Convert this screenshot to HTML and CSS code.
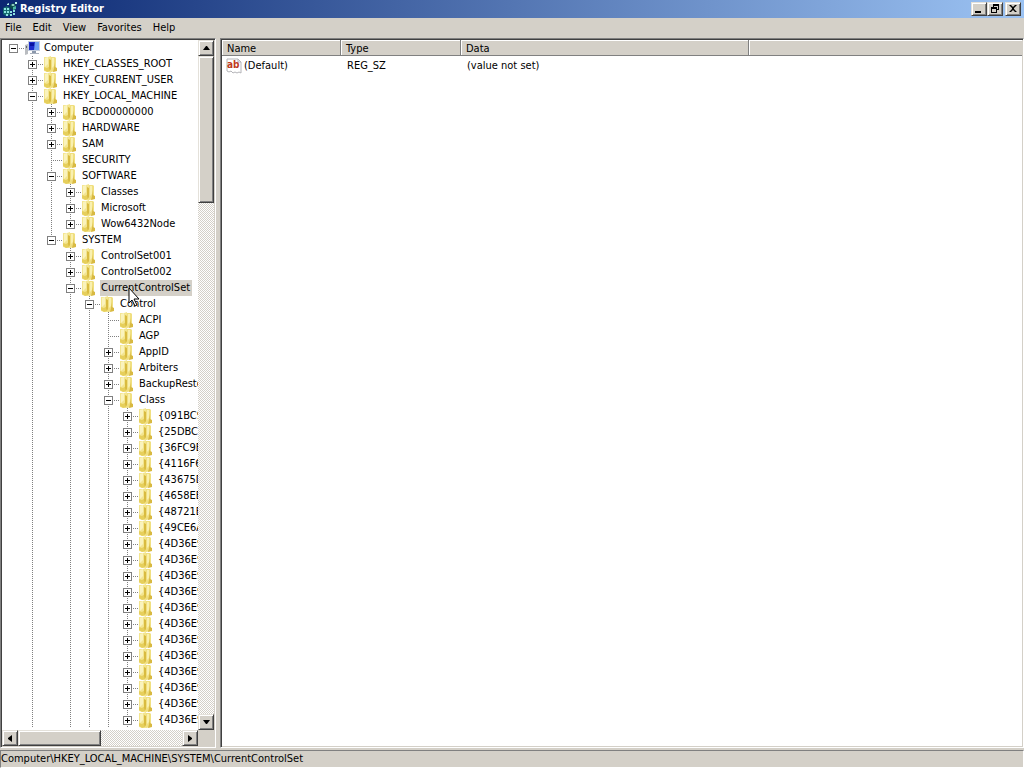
FILE: index.html
```
<!DOCTYPE html>
<html lang="en">
<head>
  <meta charset="UTF-8" /><meta name="viewport" content="width=device-width, initial-scale=1.0"/>
  <title>Registry Editor</title>
  <link rel="stylesheet" href="styles.css">
</head>
<body>
<svg class="sprite" aria-hidden="true">
  <symbol id="folder" viewBox="0 0 16 16">
    <path d="M1 1h4l3-1v16H5l-4-1z" fill="#f3e590"/>
    <path d="M2 2l3-1v7l-3 3z" fill="#faf3bd"/>
    <path d="M1 11l3 1 3-2v5l-3 1-3-2z" fill="#e6cf5c"/>
    <path d="M8 1h4l1 1v13l-5 1z" fill="#f0df80"/>
    <path d="M9 2h2v8l-2 2z" fill="#f9f0b0"/>
    <path d="M6 3l2 1v9l-1 2-1-3z" fill="#d9bb40"/>
    <path d="M12 6v5l2 1v3l-4 1 1-4z" fill="#d8b942"/>
  </symbol>
</svg>

<header class="titlebar">
  <svg class="app-icon" viewBox="0 0 16 16">
    <path d="M1 7l4-2 3 2v7l-4 1-3-2z" fill="#166b70"/>
    <path d="M2 7h2v2H2zM5 7h2v2H5zM2 10h2v2H2zM5 10h2v2H5zM4 13h2v2H4zM8 10h2v2H8zM11 9h2v2h-2zM8 13h2v2H8zM11 12h2v2h-2z" fill="#8be3e0"/>
    <path d="M8 4l3-2 3 2v4l-3 1-3-2z" fill="#0b4a4c"/>
    <path d="M9 4l2-1 2 1-2 1zM5 3l2-1v2H5zM13 1h2v2h-2z" fill="#b5f2e5"/>
    <path d="M11 6l3-1v3l-3 1z" fill="#4db6a5"/>
  </svg>
  <h1>Registry Editor</h1>
  <div class="caption-buttons">
    <button class="raised" aria-label="Minimize"><svg width="12" height="10" viewBox="0 0 12 10"><path d="M2 7h6v2H2z"/></svg></button>
    <button class="raised" aria-label="Restore"><svg width="12" height="10" viewBox="0 0 12 10"><path d="M4 0h6v6H8V5h1V2H5v1H4zM2 3h6v6H2zM3 5v3h4V5z" fill-rule="evenodd"/></svg></button>
    <button class="raised close" aria-label="Close"><svg width="12" height="10" viewBox="0 0 12 10"><path d="M2 1h2l2 2 2-2h2L7 4v1l3 3H8L6 6 4 8H2l3-3V4z"/></svg></button>
  </div>
</header>

<nav class="menubar">
  <button>File</button><button>Edit</button><button>View</button><button>Favorites</button><button>Help</button>
</nav>

<main class="panes">
  <section class="pane tree-pane">
    <div class="tree">
      <ul class="root">
        <li>
          <div class="row"><button class="toggle open" aria-label="Collapse"></button><i class="dash"></i>
            <svg class="icon" viewBox="0 0 16 16"><path d="M1 5l3-1v10l-3 1z" fill="#b9bcc0"/><path d="M2 6h1v2H2z" fill="#5c6470"/><path d="M4 1h12v10H4z" fill="#c5cede"/><path d="M5 2h10v8H5z" fill="#1c2ccc"/><path d="M11 2h4v8h-5z" fill="#6fa0f2"/><path d="M6 3h4v3H6z" fill="#0712a0"/><path d="M8 11h4v2H8z" fill="#8a97ab"/><path d="M6 13h9v1H6z" fill="#aab2be"/></svg>
            <span class="label">Computer</span></div>
          <ul>
            <li><div class="row"><button class="toggle" aria-label="Expand"></button><i class="dash"></i><svg class="icon"><use href="#folder"/></svg><span class="label">HKEY_CLASSES_ROOT</span></div></li>
            <li><div class="row"><button class="toggle" aria-label="Expand"></button><i class="dash"></i><svg class="icon"><use href="#folder"/></svg><span class="label">HKEY_CURRENT_USER</span></div></li>
            <li><div class="row"><button class="toggle open" aria-label="Collapse"></button><i class="dash"></i><svg class="icon"><use href="#folder"/></svg><span class="label">HKEY_LOCAL_MACHINE</span></div>
              <ul>
                <li><div class="row"><button class="toggle" aria-label="Expand"></button><i class="dash"></i><svg class="icon"><use href="#folder"/></svg><span class="label">BCD00000000</span></div></li>
                <li><div class="row"><button class="toggle" aria-label="Expand"></button><i class="dash"></i><svg class="icon"><use href="#folder"/></svg><span class="label">HARDWARE</span></div></li>
                <li><div class="row"><button class="toggle" aria-label="Expand"></button><i class="dash"></i><svg class="icon"><use href="#folder"/></svg><span class="label">SAM</span></div></li>
                <li><div class="row"><i class="dash long"></i><svg class="icon"><use href="#folder"/></svg><span class="label">SECURITY</span></div></li>
                <li><div class="row"><button class="toggle open" aria-label="Collapse"></button><i class="dash"></i><svg class="icon"><use href="#folder"/></svg><span class="label">SOFTWARE</span></div>
                  <ul>
                    <li><div class="row"><button class="toggle" aria-label="Expand"></button><i class="dash"></i><svg class="icon"><use href="#folder"/></svg><span class="label">Classes</span></div></li>
                    <li><div class="row"><button class="toggle" aria-label="Expand"></button><i class="dash"></i><svg class="icon"><use href="#folder"/></svg><span class="label">Microsoft</span></div></li>
                    <li class="last"><div class="row"><button class="toggle" aria-label="Expand"></button><i class="dash"></i><svg class="icon"><use href="#folder"/></svg><span class="label">Wow6432Node</span></div></li>
                  </ul>
                </li>
                <li class="last"><div class="row"><button class="toggle open" aria-label="Collapse"></button><i class="dash"></i><svg class="icon"><use href="#folder"/></svg><span class="label">SYSTEM</span></div>
                  <ul>
                    <li><div class="row"><button class="toggle" aria-label="Expand"></button><i class="dash"></i><svg class="icon"><use href="#folder"/></svg><span class="label">ControlSet001</span></div></li>
                    <li><div class="row"><button class="toggle" aria-label="Expand"></button><i class="dash"></i><svg class="icon"><use href="#folder"/></svg><span class="label">ControlSet002</span></div></li>
                    <li><div class="row"><button class="toggle open" aria-label="Collapse"></button><i class="dash"></i><svg class="icon"><use href="#folder"/></svg><span class="label selected">CurrentControlSet
                        <svg class="cursor" width="13" height="21" viewBox="0 0 13 21"><path d="M1 1v15l3-3 3 6 2-1-3-6h5z" fill="#fff" stroke="#000"/></svg></span></div>
                      <ul>
                        <li><div class="row"><button class="toggle open" aria-label="Collapse"></button><i class="dash"></i><svg class="icon"><use href="#folder"/></svg><span class="label">Control</span></div>
                          <ul>
                            <li><div class="row"><i class="dash long"></i><svg class="icon"><use href="#folder"/></svg><span class="label">ACPI</span></div></li>
                            <li><div class="row"><i class="dash long"></i><svg class="icon"><use href="#folder"/></svg><span class="label">AGP</span></div></li>
                            <li><div class="row"><button class="toggle" aria-label="Expand"></button><i class="dash"></i><svg class="icon"><use href="#folder"/></svg><span class="label">AppID</span></div></li>
                            <li><div class="row"><button class="toggle" aria-label="Expand"></button><i class="dash"></i><svg class="icon"><use href="#folder"/></svg><span class="label">Arbiters</span></div></li>
                            <li><div class="row"><button class="toggle" aria-label="Expand"></button><i class="dash"></i><svg class="icon"><use href="#folder"/></svg><span class="label">BackupRestore</span></div></li>
                            <li><div class="row"><button class="toggle open" aria-label="Collapse"></button><i class="dash"></i><svg class="icon"><use href="#folder"/></svg><span class="label">Class</span></div>
                              <ul id="classKeys"></ul>
                            </li>
                          </ul>
                        </li>
                      </ul>
                    </li>
                  </ul>
                </li>
              </ul>
            </li>
          </ul>
        </li>
      </ul>
    </div>
    <div class="scrollbar vertical">
      <button class="raised" aria-label="Scroll up"><svg width="7" height="4" viewBox="0 0 7 4"><path d="M3 0h1l3 4H0z"/></svg></button>
      <div class="thumb raised"></div>
      <button class="raised end" aria-label="Scroll down"><svg width="7" height="4" viewBox="0 0 7 4"><path d="M0 0h7L4 4H3z"/></svg></button>
    </div>
    <div class="scrollbar horizontal">
      <button class="raised" aria-label="Scroll left"><svg width="4" height="7" viewBox="0 0 4 7"><path d="M4 0v7L0 4V3z"/></svg></button>
      <div class="thumb raised"></div>
      <button class="raised end" aria-label="Scroll right"><svg width="4" height="7" viewBox="0 0 4 7"><path d="M0 0l4 3v1L0 7z"/></svg></button>
    </div>
  </section>

  <section class="pane value-pane">
    <table>
      <colgroup><col class="col-name"><col class="col-type"><col class="col-data"><col></colgroup>
      <thead><tr><th>Name</th><th>Type</th><th>Data</th><th></th></tr></thead>
      <tbody>
        <tr>
          <td class="name"><div class="value-name"><svg class="icon" viewBox="0 0 16 16"><path d="M1 1h11l3 3v11l-2-1-2 1-2-1-2 1-2-2-2 1-2-1z" fill="#fff" stroke="#b4b4b8"/><path d="M12 1v3h3" fill="none" stroke="#b4b4b8"/><text x="1" y="10" class="ab">ab</text></svg>(Default)</div></td>
          <td>REG_SZ</td><td>(value not set)</td><td></td>
        </tr>
      </tbody>
    </table>
  </section>
</main>

<footer class="statusbar">Computer\HKEY_LOCAL_MACHINE\SYSTEM\CurrentControlSet</footer>

<script>
  // Subkeys of Control\Class, cut off by the pane edge
  const keys=["{091BC9","{25DBCE","{36FC9E","{4116F6","{43675D","{4658EE","{48721E","{49CE6A"];
  for(let i=0;i<12;i++){keys.push("{4D36E9");}
  document.getElementById("classKeys").innerHTML=keys.map(k=>`<li><div class="row"><button class="toggle" aria-label="Expand"></button><i class="dash"></i><svg class="icon"><use href="#folder"/></svg><span class="label">${k}</span></div></li>`).join("");
</script>
</body>
</html>
```
FILE: styles.css
```
* { box-sizing: border-box; }
body {
  margin: 0;
  height: 100vh;
  display: flex;
  flex-direction: column;
  overflow: hidden;
  font: 11px/16px Tahoma, "DejaVu Sans Condensed", "DejaVu Sans", sans-serif;
  background: #d4d0c8;
  color: #000;
}
button { font: inherit; color: inherit; margin: 0; padding: 0; border: none; background: none; }
ul { list-style: none; margin: 0; padding: 0; }
.sprite { display: none; }
.icon { width: 16px; height: 16px; flex: none; }

/* 3D edges */
.raised {
  display: flex; align-items: center; justify-content: center; flex: none;
  background: #d4d0c8;
  border: 1px solid; border-color: #e4e1da #404040 #404040 #e4e1da;
  box-shadow: inset 1px 1px #fff, inset -1px -1px #808080;
}

/* Title and menu */
.titlebar { display: flex; align-items: center; height: 18px; flex: none; padding: 0 3px 0 2px; background: linear-gradient(to right, #0b2872, #9cc3f3); color: #fff; }
.app-icon { width: 16px; height: 16px; margin-right: 2px; }
.titlebar h1 { margin: 0; font-size: 11px; flex: 1; }
.caption-buttons { display: flex; }
.caption-buttons button { width: 16px; height: 14px; }
.caption-buttons .close { margin-left: 2px; }
.menubar { display: flex; gap: 11px; height: 20px; flex: none; padding: 2px 5px; }

/* Panes */
.panes { flex: 1; min-height: 0; display: grid; grid-template-columns: 216px 1fr; gap: 4px; }
.pane { background: #fff; border: 1px solid; border-color: #808080 #fff #fff #808080; box-shadow: inset 1px 1px #404040, inset -1px -1px #d4d0c8; padding: 1px; min-height: 0; min-width: 0; overflow: hidden; }
.tree-pane { display: grid; grid-template: 1fr 16px / 1fr 16px; background: #d4d0c8; }
.tree { background: #fff; overflow: hidden; min-height: 0; min-width: 0; }

/* Tree */
.root { padding-bottom: 16px; }
.tree ul ul { margin-left: 19px; }
.tree ul ul > li { background: repeating-linear-gradient(#808080 0 1px, transparent 1px 2px) 11px 0 / 1px 100% no-repeat; }
.tree ul ul > li.last { background-size: 1px 8px; }
.row { display: flex; align-items: center; height: 16px; white-space: nowrap; padding-left: 7px; }
.toggle {
  width: 9px; height: 9px; flex: none; border: 1px solid #808080;
  background: linear-gradient(#000, #000) center / 5px 1px no-repeat, linear-gradient(#000, #000) center / 1px 5px no-repeat, #fff;
}
.toggle.open { background: linear-gradient(#000, #000) center / 5px 1px no-repeat, #fff; }
.dash { width: 6px; height: 1px; flex: none; background: repeating-linear-gradient(to right, transparent 0 1px, #808080 1px 2px); }
.dash.long { width: 10px; margin-left: 5px; }
.label { position: relative; margin-left: 3px; padding: 0 2px 0 1px; }
.selected { background: #d4d0c8; }
.cursor { position: absolute; left: 28px; top: 7px; z-index: 1; }

/* Scrollbars */
.scrollbar { display: flex; background: repeating-conic-gradient(#fff 0 25%, #d4d0c8 0 50%) 0 0 / 2px 2px; }
.scrollbar button { width: 16px; height: 16px; }
.scrollbar .end { margin-left: auto; }
.vertical { flex-direction: column; }
.vertical .end { margin: auto 0 0; }
.vertical .thumb { height: 147px; }
.horizontal .thumb { width: 83px; }

/* Value list */
table { width: 100%; table-layout: fixed; border-collapse: separate; border-spacing: 0; }
.col-name { width: 119px; }
.col-type { width: 120px; }
.col-data { width: 288px; }
th { height: 16px; padding: 2px 5px 0; line-height: 13px; text-align: left; font-weight: normal; background: #d4d0c8; border-right: 1px solid #808080; border-bottom: 1px solid #808080; box-shadow: inset 1px 1px #fff; }
th:last-child { border-right: none; }
td { padding: 2px 6px 0; height: 18px; }
td.name { padding-left: 4px; }
.value-name { display: flex; gap: 2px; }
.ab { font: bold 10px "DejaVu Sans Condensed", sans-serif; fill: #c03a20; }

.statusbar { height: 18px; flex: none; margin-top: 2px; border: 1px solid; border-color: #808080 #fff #fff #808080; }
```
